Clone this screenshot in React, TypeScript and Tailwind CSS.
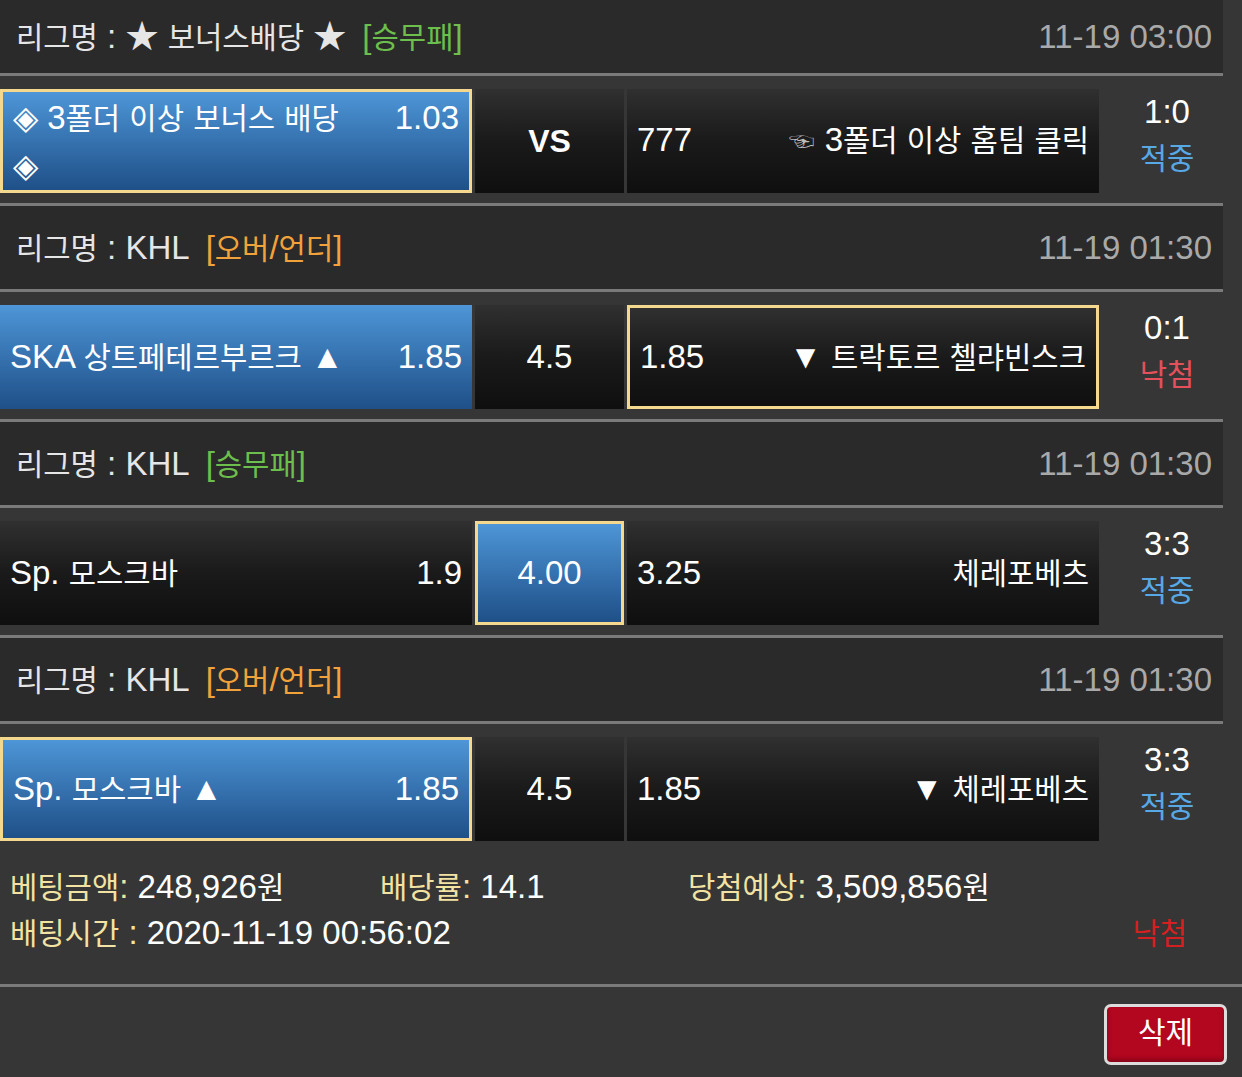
import React from 'react';

// hangul runs are drawn a bit smaller than latin so widths match the screenshot
function K({ t }: { t: string }) {
  const parts = t.split(/([\uAC00-\uD7A3\u3131-\u318E]+)/);
  return (
    <>
      {parts.map((p, i) =>
        i % 2 === 1 ? (
          <span key={i} className="text-[0.9em]">
            {p}
          </span>
        ) : (
          <React.Fragment key={i}>{p}</React.Fragment>
        )
      )}
    </>
  );
}

type Cell = {
  left: React.ReactNode;
  right?: React.ReactNode;
  blue?: boolean;
  picked?: boolean;
};

type Match = {
  league: string;
  kind: string;
  kindColor: string;
  time: string;
  home: Cell;
  mid: { text: string; blue?: boolean; picked?: boolean; bold?: boolean };
  away: Cell;
  score: string;
  result: string;
  resultColor: string;
  first?: boolean;
};

const matches: Match[] = [
  {
    league: '★ 보너스배당 ★',
    kind: '[승무패]',
    kindColor: 'text-[#6cbf4c]',
    time: '11-19 03:00',
    home: {
      left: (
        <>
          <K t="◈ 3폴더 이상 보너스 배당" />
          <br />◈
        </>
      ),
      right: '1.03',
      blue: true,
      picked: true,
    },
    mid: { text: 'VS', bold: true },
    away: {
      left: '777',
      right: (
        <>
          <span className="text-[26px] text-[#bdbdbd] mr-[10px] align-middle">☜</span>
          <K t="3폴더 이상 홈팀 클릭" />
        </>
      ),
    },
    score: '1:0',
    result: '적중',
    resultColor: 'text-[#58a8e6]',
    first: true,
  },
  {
    league: 'KHL',
    kind: '[오버/언더]',
    kindColor: 'text-[#f2a23a]',
    time: '11-19 01:30',
    home: { left: <K t="SKA 상트페테르부르크 ▲" />, right: '1.85', blue: true },
    mid: { text: '4.5' },
    away: { left: '1.85', right: <K t="▼ 트락토르 첼랴빈스크" />, picked: true },
    score: '0:1',
    result: '낙첨',
    resultColor: 'text-[#e5505a]',
  },
  {
    league: 'KHL',
    kind: '[승무패]',
    kindColor: 'text-[#6cbf4c]',
    time: '11-19 01:30',
    home: { left: <K t="Sp. 모스크바" />, right: '1.9' },
    mid: { text: '4.00', blue: true, picked: true },
    away: { left: '3.25', right: <K t="체레포베츠" /> },
    score: '3:3',
    result: '적중',
    resultColor: 'text-[#58a8e6]',
  },
  {
    league: 'KHL',
    kind: '[오버/언더]',
    kindColor: 'text-[#f2a23a]',
    time: '11-19 01:30',
    home: { left: <K t="Sp. 모스크바 ▲" />, right: '1.85', blue: true, picked: true },
    mid: { text: '4.5' },
    away: { left: '1.85', right: <K t="▼ 체레포베츠" /> },
    score: '3:3',
    result: '적중',
    resultColor: 'text-[#58a8e6]',
  },
];

function bg(blue?: boolean, picked?: boolean) {
  const fill = blue
    ? 'bg-gradient-to-b from-[#4e96d8] to-[#1f5088]'
    : 'bg-gradient-to-b from-[#303030] via-[#1a1a1a] to-[#0f0f0f]';
  return fill + (picked ? ' border-[3px] border-[#f4d88e]' : '');
}

function TeamCell({ cell }: { cell: Cell }) {
  return (
    <div className={`w-[472px] h-full flex items-center px-[10px] text-white ${bg(cell.blue, cell.picked)}`}>
      <div className="flex w-full justify-between items-start leading-[47px]">
        <div>{cell.left}</div>
        <div className="whitespace-nowrap">{cell.right}</div>
      </div>
    </div>
  );
}

function MatchBlock({ m, last }: { m: Match; last: boolean }) {
  return (
    <div>
      <div
        className={`flex items-center justify-between pl-4 pr-[11px] bg-[#2a2a2a] border-b-[3px] border-[#7a7a7a] ${
          m.first ? 'h-[76px]' : 'h-[86px]'
        }`}
      >
        <div className="text-[#e6e6e6]">
          <K t={`리그명 : ${m.league}`} />
          <span className={`ml-4 ${m.kindColor}`}>
            <K t={m.kind} />
          </span>
        </div>
        <div className="text-[#a9a9a9]">{m.time}</div>
      </div>
      <div
        className={`flex items-stretch pt-[13px] pb-[10px] h-[104px] box-content ${
          last ? '' : 'border-b-[3px] border-[#7a7a7a]'
        }`}
      >
        <TeamCell cell={m.home} />
        <div
          className={`ml-[3px] w-[149px] flex items-center justify-center text-white ${bg(m.mid.blue, m.mid.picked)} ${
            m.mid.bold ? 'font-bold text-[32px]' : ''
          }`}
        >
          {m.mid.text}
        </div>
        <div className="ml-[3px]">
          <TeamCell cell={m.away} />
        </div>
        <div className="flex-1 flex flex-col items-center justify-center pl-[12px] leading-[46px] -mt-[12px]">
          <div className="text-white">{m.score}</div>
          <div className={m.resultColor}>
            <K t={m.result} />
          </div>
        </div>
      </div>
    </div>
  );
}

export default function App() {
  return (
    <div className="w-[1242px] h-[1077px] overflow-hidden bg-[#363636] font-['Liberation_Sans','Noto_Sans_CJK_KR',sans-serif] text-[33px]">
      <div className="w-[1223px]">
        {matches.map((m, i) => (
          <MatchBlock key={i} m={m} last={i === matches.length - 1} />
        ))}
        <div className="pt-[13px] pb-[28px] pl-[10px] leading-[45px]">
          <div className="flex">
            <div className="w-[370px]">
              <span className="text-[#f3e3a3]">
                <K t="베팅금액:" />
              </span>
              <span className="text-white">
                <K t=" 248,926원" />
              </span>
            </div>
            <div className="w-[308px]">
              <span className="text-[#f3e3a3]">
                <K t="배당률:" />
              </span>
              <span className="text-white"> 14.1</span>
            </div>
            <div>
              <span className="text-[#f3e3a3]">
                <K t="당첨예상:" />
              </span>
              <span className="text-white">
                <K t=" 3,509,856원" />
              </span>
            </div>
          </div>
          <div className="flex justify-between pr-[36px]">
            <div>
              <span className="text-[#f3e3a3]">
                <K t="배팅시간 :" />
              </span>
              <span className="text-white"> 2020-11-19 00:56:02</span>
            </div>
            <div className="text-[#d42020]">
              <K t="낙첨" />
            </div>
          </div>
        </div>
      </div>
      <div className="border-t-[3px] border-[#7a7a7a] flex justify-end pt-[17px] pr-[15px]">
        <button className="w-[123px] h-[61px] rounded-[7px] border-[3px] border-[#dcdcdc] bg-[#b3061f] text-white text-[30px] leading-none pb-[4px] shadow-[inset_0_-3px_4px_rgba(0,0,0,0.25)]">
          삭제
        </button>
      </div>
    </div>
  );
}
